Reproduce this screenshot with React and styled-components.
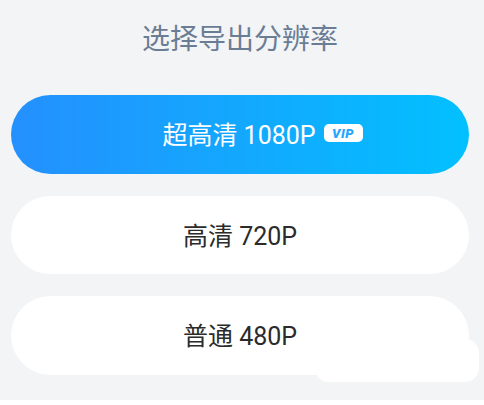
import React from 'react';
import styled, { createGlobalStyle } from 'styled-components';

const Global = createGlobalStyle`
  html, body { margin: 0; padding: 0; background: #fff; }
  body { font-family: Roboto, "Noto Sans CJK SC", "Noto Sans", sans-serif; }
`;

const Page = styled.div`
  position: relative;
  width: 484px;
  height: 400px;
  box-sizing: border-box;
  background: #f3f4f6;
  padding: 0 15px 0 11px;
  overflow: hidden;
`;

const Title = styled.h1`
  margin: 0;
  height: 95px;
  padding-top: 23px;
  box-sizing: border-box;
  font-size: 28px;
  line-height: 34px;
  font-weight: 400;
  color: #6b7d94;
  text-align: center;
`;

const Options = styled.div`
  display: flex;
  flex-direction: column;
  gap: 22px;
`;

const Option = styled.button`
  display: flex;
  align-items: center;
  justify-content: center;
  gap: 8px;
  width: 458px;
  height: 78.5px;
  padding: 0 0 2px ${p => (p.$active ? '45px' : '0')};
  box-sizing: border-box;
  border: 0;
  border-radius: 40px;
  font-family: inherit;
  font-size: 25px;
  font-weight: 400;
  color: ${p => (p.$active ? '#fff' : '#2b2b2b')};
  background: ${p => (p.$active ? 'linear-gradient(90deg, #2490fe 0%, #02c0fe 100%)' : '#fff')};
`;

const Vip = styled.span`
  display: inline-flex;
  align-items: center;
  justify-content: center;
  width: 39px;
  height: 18px;
  border-radius: 5px;
  background: #fff;
  color: #1fa6fe;
  font-size: 13px;
  font-weight: 900;
  font-style: italic;
  letter-spacing: 0.6px;
`;

const Patch = styled.div`
  position: absolute;
  left: 315px;
  top: 339px;
  width: 164px;
  height: 43px;
  border-radius: 14px;
  background: #fff;
`;

export default function App() {
  return (
    <Page>
      <Global />
      <Title>选择导出分辨率</Title>
      <Options>
        <Option $active>超高清 1080P<Vip>VIP</Vip></Option>
        <Option>高清 720P</Option>
        <Option>普通 480P</Option>
      </Options>
      <Patch />
    </Page>
  );
}
